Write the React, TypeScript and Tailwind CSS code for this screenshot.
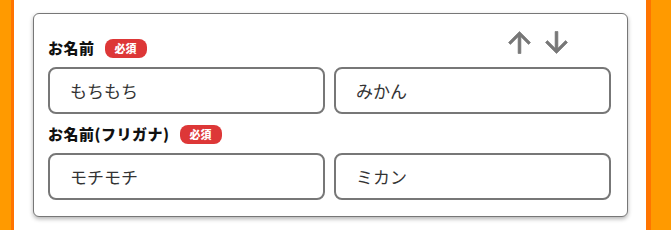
const font = { fontFamily: '"Noto Sans CJK JP", "Noto Sans", sans-serif' };

function Badge() {
  return (
    <span className="ml-[10px] inline-flex h-[19px] items-center rounded-[8px] bg-[#dd3737] px-[10px] text-[11px] font-black leading-none text-white">
      必須
    </span>
  );
}

function Field({ value }: { value: string }) {
  return (
    <input
      type="text"
      defaultValue={value}
      className="h-[47px] w-full min-w-0 rounded-[8px] border-2 border-[#777] bg-white pl-[20px] text-[17px] text-[#333] outline-none"
      style={font}
    />
  );
}

function ArrowUp() {
  return (
    <svg width="33" height="33" viewBox="0 0 24 24" fill="#777" stroke="#777" strokeWidth="0.5">
      <path d="M4 12l1.41 1.41L11 7.83V20h2V7.83l5.58 5.59L20 12l-8-8-8 8z" />
    </svg>
  );
}

function ArrowDown() {
  return (
    <svg width="33" height="33" viewBox="0 0 24 24" fill="#777" stroke="#777" strokeWidth="0.5">
      <path d="M20 12l-1.41-1.41L13 16.17V4h-2v12.17l-5.58-5.59L4 12l8 8 8-8z" />
    </svg>
  );
}

export default function App() {
  return (
    <div className="flex h-[230px] w-[671px] overflow-hidden" style={font}>
      <div className="w-[11px] shrink-0 bg-[#ff9a00]" />
      <div className="w-[3px] shrink-0 bg-[#ff7400]" />
      <div className="min-w-0 flex-1 bg-white pl-[19px] pr-[18px] pt-[13px]">
        <div className="rounded-[6px] border border-[#777] bg-white pb-[16px] pl-[14px] pr-[16px] pt-[25px] shadow-[0_2px_4px_rgba(0,0,0,0.3)]">
          <div className="flex h-[19px] items-center">
            <span className="text-[15px] font-black tracking-[0.5px] text-[#111]">お名前</span>
            <Badge />
            <div className="ml-auto mr-[38px] -mt-[13px] flex gap-[4px]">
              <ArrowUp />
              <ArrowDown />
            </div>
          </div>
          <div className="mt-[9px] grid grid-cols-2 gap-[9px]">
            <Field value="もちもち" />
            <Field value="みかん" />
          </div>
          <div className="mt-[11px] flex h-[19px] items-center">
            <span className="text-[15px] font-black tracking-[0.5px] text-[#111]">お名前(フリガナ)</span>
            <Badge />
          </div>
          <div className="mt-[9px] grid grid-cols-2 gap-[9px]">
            <Field value="モチモチ" />
            <Field value="ミカン" />
          </div>
        </div>
      </div>
      <div className="w-[5px] shrink-0 bg-[#ff7400]" />
      <div className="w-[20px] shrink-0 bg-[#ff9a00]" />
    </div>
  );
}
